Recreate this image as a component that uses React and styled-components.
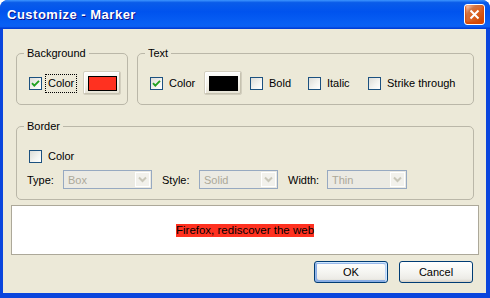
import React from 'react'
import styled, { createGlobalStyle } from 'styled-components'

const GlobalStyle = createGlobalStyle`
html, body {
    margin: 0;
    padding: 0;
    background: #fff;
}
body {
    font-family: 'Liberation Sans', Arial, sans-serif;
    font-size: 11px;
    color: #000;
}
`

const Window = styled.div`
width: 490px;
height: 298px;
background: #0a45dd;
border-radius: 8px 8px 0 0;
overflow: hidden;
display: flex;
flex-direction: column;
`

const TitleBar = styled.div`
height: 29px;
flex: none;
display: flex;
align-items: center;
justify-content: space-between;
padding: 0 5px 0 7px;
box-sizing: border-box;
background: linear-gradient(180deg, #3d95ff 0%, #0a5ce9 9%, #0053ee 40%, #0860f4 85%, #0a5df2 92%, #003fd8 97%, #003dd7 100%);
`

const Title = styled.span`
color: #fff;
font-weight: bold;
font-size: 13px;
letter-spacing: 0.5px;
text-shadow: 1px 1px #0f1089;
`

const CloseButton = styled.button`
width: 21px;
height: 21px;
padding: 0;
box-sizing: border-box;
border: 1px solid #fff;
border-radius: 3px;
display: flex;
align-items: center;
justify-content: center;
background: radial-gradient(circle at 90% 90%, #cc4600 0%, #dc6527 55%, #cd7546 70%, #ffccb2 90%, #fff 100%);
box-shadow: inset 0 -1px 2px 1px #da4600;
`

const Body = styled.div`
flex: 1;
margin: 0 4px 5px 3px;
background: #ece9d8;
padding: 0 7px 0 8px;
display: flex;
flex-direction: column;
`

const Groups = styled.div`
padding: 24px 5px 0;
display: flex;
flex-direction: column;
gap: 21px;
`

const GroupRow = styled.div`
display: flex;
gap: 9px;
`

const GroupBox = styled.div`
position: relative;
box-sizing: border-box;
width: ${props => props.width ? props.width + 'px' : 'auto'};
flex: ${props => props.width ? 'none' : '1'};
border: 1px solid #bab7a8;
border-radius: 5px;
padding: ${props => props.pad};
display: flex;
flex-direction: column;
`

const Caption = styled.span`
position: absolute;
top: -8px;
left: 7px;
padding: 0 3px;
background: #ece9d8;
line-height: 14px;
`

const Row = styled.div`
display: flex;
align-items: center;
height: ${props => props.h}px;
margin-left: ${props => props.indent || 0}px;
margin-top: ${props => props.top || 0}px;
`

const CheckItem = styled.label`
display: flex;
align-items: center;
width: ${props => props.width ? props.width + 'px' : 'auto'};
flex: none;
`

const Box = styled.span`
width: 13px;
height: 13px;
box-sizing: border-box;
border: 1px solid #1c5180;
background: linear-gradient(135deg, #dcdcd7 0%, #f4f4f1 60%, #fff 100%);
display: flex;
align-items: center;
justify-content: center;
flex: none;
`

const CheckText = styled.span`
margin-left: 6px;
line-height: 13px;
outline: ${props => props.focused ? '1px dotted #000' : 'none'};
outline-offset: 2px;
`

const ColorButton = styled.button`
width: 38px;
height: 24px;
padding: 0;
margin-right: ${props => props.after || 0}px;
box-sizing: border-box;
flex: none;
border: 1px solid #d3cfbf;
border-radius: 2px;
background: linear-gradient(180deg, #fdfdfb 0%, #f3f1e8 60%, #e6e3d4 100%);
box-shadow: inset -1px -1px #c6c2b0, inset 1px 1px #fff;
display: flex;
align-items: center;
justify-content: center;
`

const Swatch = styled.span`
width: 29px;
height: 15px;
box-sizing: border-box;
border: 1px solid #000;
background: ${props => props.color};
margin: 1px 0 0 1px;
`

const FieldLabel = styled.span`
width: ${props => props.width}px;
flex: none;
`

const Select = styled.div`
width: ${props => props.width}px;
height: 19px;
box-sizing: border-box;
flex: none;
margin-right: ${props => props.after || 0}px;
border: 1px solid #97a9c1;
background: #ebeae3;
display: flex;
align-items: center;
justify-content: space-between;
padding: 1px;
color: #aca899;
`

const SelectValue = styled.span`
padding-left: 3px;
`

const DropButton = styled.span`
width: 15px;
height: 15px;
box-sizing: border-box;
border: 1px solid #fff;
background: #f2f1ec;
display: flex;
align-items: center;
justify-content: center;
`

const Preview = styled.div`
margin-top: 5px;
height: 50px;
box-sizing: border-box;
border: 1px solid #aca899;
background: #fff;
display: flex;
align-items: center;
justify-content: center;
`

const Sample = styled.span`
background: #ff3120;
font-size: 11.5px;
line-height: 13px;
`

const ButtonRow = styled.div`
margin-top: 6px;
padding-right: 6px;
display: flex;
justify-content: flex-end;
gap: 11px;
`

const ActionButton = styled.button`
width: 74px;
height: 22px;
box-sizing: border-box;
padding: 0;
font-family: inherit;
font-size: 11px;
color: #000;
border: 1px solid #003c74;
border-radius: 3px;
background: linear-gradient(180deg, #fff 0%, #f4f4f0 55%, #ecebe6 85%, #d6d0c5 100%);
box-shadow: ${props => props.primary
        ? 'inset -1px 1px #cee7ff, inset 1px 2px #98b8ea, inset -2px 2px #bcd4f6, inset 1px -1px #89ade4, inset 2px -2px #89ade4'
        : 'none'};
`

const Check = () => (
    <svg width="9" height="9" viewBox="0 0 9 9">
        <path d="M1 4.2 L3.3 6.6 L8 1.8" fill="none" stroke="#21a121" strokeWidth="1.9" />
    </svg>
)

const Checkbox = ({ checked, label, width, focused }) => (
    <CheckItem width={width}>
        <Box>{checked && <Check />}</Box>
        <CheckText focused={focused}>{label}</CheckText>
    </CheckItem>
)

const Combo = ({ value, width, after }) => (
    <Select width={width} after={after}>
        <SelectValue>{value}</SelectValue>
        <DropButton>
            <svg width="9" height="7" viewBox="0 0 9 7">
                <path d="M1 1.5 L4.5 5 L8 1.5" fill="none" stroke="#c9c7ba" strokeWidth="2" />
            </svg>
        </DropButton>
    </Select>
)

const App = () => {
    return (
        <>
            <GlobalStyle />
            <Window>
                <TitleBar>
                    <Title>Customize - Marker</Title>
                    <CloseButton>
                        <svg width="11" height="11" viewBox="0 0 11 11">
                            <path d="M1.5 1.5 L9.5 9.5 M9.5 1.5 L1.5 9.5" stroke="#fff" strokeWidth="2" />
                        </svg>
                    </CloseButton>
                </TitleBar>
                <Body>
                    <Groups>
                        <GroupRow>
                            <GroupBox width={112} pad="17px 6px 9px 12px">
                                <Caption>Background</Caption>
                                <Row h={24}>
                                    <Checkbox checked label="Color" width={54} focused />
                                    <ColorButton><Swatch color="#ff3120" /></ColorButton>
                                </Row>
                            </GroupBox>
                            <GroupBox pad="17px 6px 9px 12px">
                                <Caption>Text</Caption>
                                <Row h={24}>
                                    <Checkbox checked label="Color" width={54} />
                                    <ColorButton after={8}><Swatch color="#000" /></ColorButton>
                                    <Checkbox label="Bold" width={58} />
                                    <Checkbox label="Italic" width={60} />
                                    <Checkbox label="Strike through" />
                                </Row>
                            </GroupBox>
                        </GroupRow>
                        <GroupBox pad="21px 6px 10px 10px">
                            <Caption>Border</Caption>
                            <Row h={17} indent={2}>
                                <Checkbox label="Color" />
                            </Row>
                            <Row h={19} top={5}>
                                <FieldLabel width={36}>Type:</FieldLabel>
                                <Combo value="Box" width={89} after={10} />
                                <FieldLabel width={37}>Style:</FieldLabel>
                                <Combo value="Solid" width={79} after={10} />
                                <FieldLabel width={39}>Width:</FieldLabel>
                                <Combo value="Thin" width={80} />
                            </Row>
                        </GroupBox>
                    </Groups>
                    <Preview>
                        <Sample>Firefox, rediscover the web</Sample>
                    </Preview>
                    <ButtonRow>
                        <ActionButton primary>OK</ActionButton>
                        <ActionButton>Cancel</ActionButton>
                    </ButtonRow>
                </Body>
            </Window>
        </>
    )
}

export default App
